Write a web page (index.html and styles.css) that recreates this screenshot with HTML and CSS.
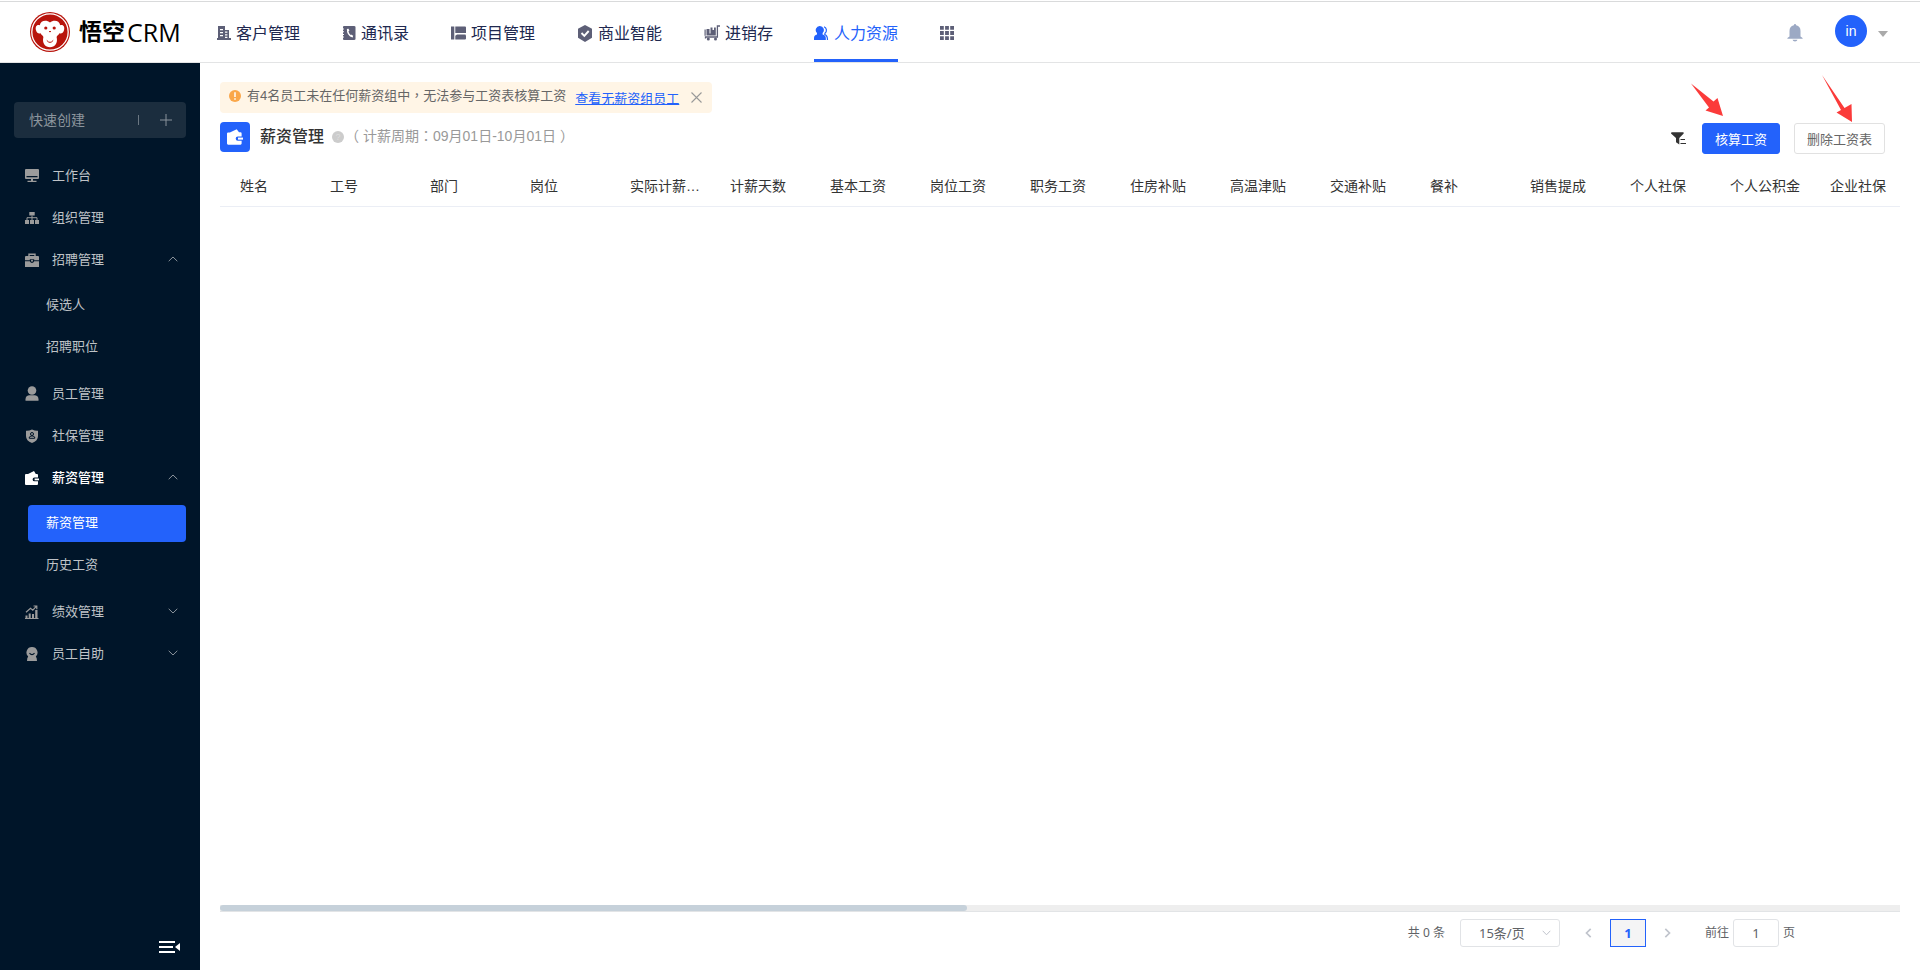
FILE: index.html
```html
<!DOCTYPE html>
<html lang="zh-CN">
<head>
  <meta charset="UTF-8">
  <meta name="viewport" content="width=device-width, initial-scale=1.0">
  <title>薪资管理 - 悟空CRM</title>
  <link rel="stylesheet" href="styles.css">
</head>
<body>
  <header class="header">
    <div class="logo">
      <svg width="40" height="40" viewBox="0 0 40 40">
        <circle cx="20" cy="20" r="20" fill="#b8140c"/>
        <circle cx="20" cy="20" r="18.2" fill="none" stroke="#fff" stroke-width="1.3"/>
        <path fill="#fff" d="M20 10.5C17 7.6 10.6 7.8 9.8 13.2C6.6 12 5 15 6 18.2C6.8 21 8.8 22 10.6 21.2C11.4 23 13 23.4 13.4 25C11.8 31.5 15.4 35.2 20 35.2S28.2 31.5 26.6 25C27 23.4 28.6 23 29.4 21.2C31.2 22 33.2 21 34 18.2C35 15 33.4 12 30.2 13.2C29.4 7.8 23 7.6 20 10.5Z"/>
        <circle cx="15.8" cy="16" r="1.6" fill="#b8140c"/>
        <circle cx="24.2" cy="16" r="1.6" fill="#b8140c"/>
        <path d="M19 19.6h2M16.8 28.4Q20 32.4 23.2 28.4" fill="none" stroke="#b8140c" stroke-width="1"/>
      </svg>
      <span class="logo-cn">悟空</span><span class="logo-en">CRM</span>
    </div>
    <nav class="nav">
      <a class="nav-item">
        <svg width="14" height="14" viewBox="0 0 14 14"><path fill="currentColor" fill-rule="evenodd" d="M1 0h7v4h4v8h2v2H0v-2h1zM3 3v1.3h3V3zM3 6v1.3h3V6zM3 9v1.3h3V9zM8 5.6v1.2h2.4V5.6zM8 8.2v1.2h2.4V8.2zM8 10.8V12h2.4v-1.2z"/></svg>
        <span>客户管理</span>
      </a>
      <a class="nav-item">
        <svg width="14" height="14" viewBox="0 0 14 14"><path fill="currentColor" d="M2 0h10q1.500 0 1.500 1v12q0 1-1.500 1H2q-1 0-1-1v-1.500h1v-1H1V9h1V8H1V6.200h1v-1H1V3.500h1v-1H1V1q0-1 1-1z"/><path d="M5.700 3q-.8 5.500 5 8" fill="none" stroke="#fff" stroke-width="1.300"/><path d="M5.400 3l1.400 1.900M8.600 9.300l2.200 1.300" stroke="#fff" stroke-width="1.700"/></svg>
        <span>通讯录</span>
      </a>
      <a class="nav-item">
        <svg width="15" height="14" viewBox="0 0 15 14"><path fill="currentColor" d="M0 .5h3.300v13H0zM4.300.5H14q1 0 1 1V7H4.300zM6 8.500h8.500L15 10v2.500q0 1-1 1H4.300v-3.800z"/></svg>
        <span>项目管理</span>
      </a>
      <a class="nav-item">
        <svg width="16" height="17" viewBox="0 0 16 17"><path fill="currentColor" d="M8 0l7 3.800v9L8 17l-7-4.200v-9z"/><path d="M4.500 8l2.800 2.800L11.700 6" fill="none" stroke="#fff" stroke-width="1.900"/></svg>
        <span>商业智能</span>
      </a>
      <a class="nav-item">
        <svg width="16" height="16" viewBox="0 0 16 16"><path fill="currentColor" d="M.5 4.500h1.200v6.300H.5zM2.500 4h3v4.500h1V2.500h2V5H10V2.500h1.800v8H2.500z"/><path d="M16 1h-2.600v11H1.500v1.500" fill="none" stroke="currentColor" stroke-width="1.300"/><circle cx="4.300" cy="14" r="1.500" fill="currentColor"/><circle cx="11.500" cy="14" r="1.500" fill="currentColor"/></svg>
        <span>进销存</span>
      </a>
      <a class="nav-item active">
        <svg width="15" height="14" viewBox="0 0 15 14"><path fill="currentColor" d="M5.800 0a4 4 0 0 1 2.800 6.900V8.500q3.200.7 3.200 3.500v2H0v-2q0-2.800 3-3.500V6.900A4 4 0 0 1 5.800 0z"/><path d="M10 .8a3.700 3.700 0 0 1 1 6.400l-.2 1.300q2.700 1 2.700 5.500" fill="none" stroke="currentColor" stroke-width="1.200"/></svg>
        <span>人力资源</span>
      </a>
      <a class="nav-item">
        <svg width="14" height="14" viewBox="0 0 14 14"><path fill="currentColor" d="M0 0h3.800v3.800H0zM5.100 0h3.800v3.800H5.100zM10.200 0H14v3.800h-3.800zM0 5.100h3.800v3.800H0zM5.100 5.100h3.800v3.800H5.100zM10.200 5.100H14v3.800h-3.800zM0 10.200h3.800V14H0zM5.100 10.200h3.800V14H5.100zM10.200 10.200H14V14h-3.800z"/></svg>
      </a>
    </nav>
    <div class="user">
      <svg class="bell" width="16" height="18" viewBox="0 0 16 18"><path fill="#9ca9c4" d="M8 0q1 0 1.200 1.300Q13.500 2.300 13.500 7v5.500L15.600 14v.8H.4V14l2.100-1.500V7q0-4.700 4.300-5.700Q7 0 8 0zM5.500 15.800h5Q10 17.500 8 17.500T5.500 15.800z"/></svg>
      <span class="avatar">in</span>
      <span class="caret"></span>
    </div>
  </header>

  <div class="layout">
    <aside class="sidebar">
      <div class="quick-create">
        <span class="quick-text">快速创建</span>
        <span class="quick-line"></span>
        <svg width="12" height="12" viewBox="0 0 12 12"><path d="M6 0v12M0 6h12" stroke="#8a939b" stroke-width="1"/></svg>
      </div>
      <ul class="menu">
        <li class="menu-item">
          <svg width="14" height="14" viewBox="0 0 14 14"><path fill="currentColor" fill-rule="evenodd" d="M1 0h12q1 0 1 1v8q0 1-1 1H8v1.800h3.500V13h-9v-1.200H6V10H1q-1 0-1-1V1q0-1 1-1zM1.500 7v1.200h11V7z"/></svg>
          <span>工作台</span>
        </li>
        <li class="menu-item">
          <svg width="14" height="14" viewBox="0 0 14 14"><path fill="currentColor" d="M4.300 1h5.400v3.600H4.300zM0 9h4v4H0zM5 9h4v4H5zM10 9h4v4h-4z"/><path d="M2 9V6.700h10V9M7 4.500V9" fill="none" stroke="currentColor"/></svg>
          <span>组织管理</span>
        </li>
        <li class="menu-item">
          <svg width="14" height="14" viewBox="0 0 14 14"><path d="M4 3.500V1.200h6v2.300" fill="none" stroke="currentColor" stroke-width="1.400"/><path fill="currentColor" d="M1 3h12q1 0 1 1v3.200H9.200V6.200H4.800v1H0V4q0-1 1-1zM0 8.200h4.800Q5.500 10 7 10t2.200-1.800H14V14H0z"/><circle cx="7" cy="7.700" r="1" fill="currentColor"/></svg>
          <span>招聘管理</span>
          <svg class="arrow" width="10" height="6" viewBox="0 0 10 6"><path d="M.7 5.200L5 1l4.300 4.200" fill="none" stroke="#8a939b"/></svg>
        </li>
        <li class="submenu">
          <div class="sub-item">候选人</div>
          <div class="sub-item">招聘职位</div>
        </li>
        <li class="menu-item">
          <svg width="14" height="16" viewBox="0 0 14 16"><circle cx="7" cy="4.500" r="4.300" fill="currentColor"/><path fill="currentColor" d="M4 9.300h6q3.500.7 3.500 4v1.500H.5v-1.500q0-3.300 3.500-4z"/></svg>
          <span>员工管理</span>
        </li>
        <li class="menu-item">
          <svg width="14" height="14" viewBox="0 0 14 14"><path fill="currentColor" d="M7 .5q3 1.500 6 1.300V7q0 5-6 7Q1 12 1 7V1.800Q4 2 7 .5z"/><circle cx="7" cy="5" r="1.500" fill="none" stroke="#001529"/><path d="M4.300 9.300V8L6 7h2l1.700 1v1.300z" fill="none" stroke="#001529"/></svg>
          <span>社保管理</span>
        </li>
        <li class="menu-item active">
          <svg width="14" height="14" viewBox="0 0 14 14"><path fill="currentColor" d="M3 3L9 0l1.800 2.900H12q1 0 1 1V6.500H9.500a1.900 1.900 0 0 0 0 3.800H13v2.700q0 1-1 1H1q-1 0-1-1V4q0-1 1-1z"/><path fill="currentColor" d="M9.600 7.500H14v1.800H9.600z"/></svg>
          <span>薪资管理</span>
          <svg class="arrow" width="10" height="6" viewBox="0 0 10 6"><path d="M.7 5.200L5 1l4.300 4.200" fill="none" stroke="#8a939b"/></svg>
        </li>
        <li class="submenu">
          <div class="sub-item active">薪资管理</div>
          <div class="sub-item">历史工资</div>
        </li>
        <li class="menu-item">
          <svg width="14" height="14" viewBox="0 0 14 14"><path fill="currentColor" d="M.5 10.500h2V13h-2zM3.700 8.500h2V13h-2zM7 9h2v4H7zM10.200 5h2.300v8h-2.300zM0 13h13.500v1H0z"/><path d="M1 7.300l4.500-4 2.300 1.800 3.700-4M8.500 1h3.300v3.300" fill="none" stroke="currentColor" stroke-width="1.200"/></svg>
          <span>绩效管理</span>
          <svg class="arrow" width="10" height="6" viewBox="0 0 10 6"><path d="M.7.800L5 5 9.300.8" fill="none" stroke="#8a939b"/></svg>
        </li>
        <li class="menu-item">
          <svg width="14" height="14" viewBox="0 0 14 14"><path fill="currentColor" d="M7 0a5.500 5.500 0 0 1 3.800 9.500q1.200 1 1.200 4.500H2q0-3.500 1.200-4.500A5.500 5.500 0 0 1 7 0z"/><path d="M4.500 6.200Q7 9 9.500 6.200" fill="none" stroke="#001529" stroke-width="1.200"/></svg>
          <span>员工自助</span>
          <svg class="arrow" width="10" height="6" viewBox="0 0 10 6"><path d="M.7.800L5 5 9.300.8" fill="none" stroke="#8a939b"/></svg>
        </li>
      </ul>
      <div class="collapse">
        <svg width="22" height="12" viewBox="0 0 22 12"><path fill="#fff" d="M0 0h16v2H0zM0 5h14v2H0zM0 10h16v2H0zM21 2v8l-5-4z"/></svg>
      </div>
    </aside>

    <main class="main">
      <div class="alert">
        <svg width="12" height="12" viewBox="0 0 12 12"><circle cx="6" cy="6" r="6" fill="#faa74a"/><path d="M6 2.200v4.800M6 8.200v1.600" stroke="#fff" stroke-width="1.500"/></svg>
        <span class="alert-text">有4名员工未在任何薪资组中<span class="mark" lang="zh-Hant">，</span>无法参与工资表核算工资</span>
        <a class="alert-link">查看无薪资组员工</a>
        <svg width="11" height="11" viewBox="0 0 11 11"><path d="M.5.500l10 10M10.500.5l-10 10" stroke="#999" stroke-width="1.100"/></svg>
      </div>

      <div class="title-bar">
        <span class="title-icon">
          <svg width="16" height="16" viewBox="0 0 14 14"><path fill="#fff" d="M2.500 3L8.500.2l2 2.700h1.300q1 0 1 1V6.500H9.500a1.900 1.900 0 0 0 0 3.800h3.300v2.400q0 1-1 1H1q-1 0-1-1V4q0-1 1-1z"/><path fill="#fff" d="M9.600 7.500H14v1.800H9.600z"/></svg>
        </span>
        <h1 class="title">薪资管理</h1>
        <span class="help">?</span>
        <span class="period"><span class="paren-left">（</span>计薪周期<span class="mark" lang="zh-Hant">：</span>09月01日-10月01日<span class="paren-right">）</span></span>
        <div class="actions">
          <svg width="15" height="13" viewBox="0 0 15 13"><path fill="#333" d="M0 1.500Q0 .3 1 .3h11q1 0 .7 1.200L8.300 6v6.500L5 10.300V6z"/><path d="M9.500 7.500H14M9.500 11.500H15" stroke="#333" stroke-width="1.200"/></svg>
          <button class="btn btn-primary">核算工资</button>
          <button class="btn">删除工资表</button>
        </div>
      </div>

      <div class="table-head">
        <div class="th">姓名</div>
        <div class="th">工号</div>
        <div class="th">部门</div>
        <div class="th">岗位</div>
        <div class="th">实际计薪天数</div>
        <div class="th">计薪天数</div>
        <div class="th">基本工资</div>
        <div class="th">岗位工资</div>
        <div class="th">职务工资</div>
        <div class="th">住房补贴</div>
        <div class="th">高温津贴</div>
        <div class="th">交通补贴</div>
        <div class="th">餐补</div>
        <div class="th">销售提成</div>
        <div class="th">个人社保</div>
        <div class="th">个人公积金</div>
        <div class="th last">企业社保</div>
      </div>
      <div class="table-body"></div>
      <div class="scroll-bar"><div class="scroll-thumb"></div></div>

      <div class="pagination">
        <span class="total">共 0 条</span>
        <div class="page-size">
          <span>15条/页</span>
          <svg width="9" height="6" viewBox="0 0 9 6"><path d="M.7.800l3.800 4 3.800-4" fill="none" stroke="#c0c4cc"/></svg>
        </div>
        <svg class="prev" width="7" height="10" viewBox="0 0 7 10"><path d="M5.700.8L1.500 5l4.200 4.200" fill="none" stroke="#c0c4cc" stroke-width="1.700"/></svg>
        <span class="page-num">1</span>
        <svg class="next" width="7" height="10" viewBox="0 0 7 10"><path d="M1.300.8L5.500 5 1.300 9.200" fill="none" stroke="#c0c4cc" stroke-width="1.700"/></svg>
        <span class="jump">前往</span>
        <span class="jump-input">1</span>
        <span class="jump">页</span>
      </div>
    </main>
  </div>

  <!-- red pointers over the two buttons -->
  <svg class="pointers" width="170" height="50" viewBox="0 0 170 50">
    <path fill="#fb3b3a" d="M0 8.500L22.500 26.500 26.500 23 32 41 14.500 35.500 18 32.500z"/>
    <path fill="#fb3b3a" d="M131 0L153.500 33 160.500 29 161 47 145.500 37.500 150 35z"/>
  </svg>
</body>
</html>
```

FILE: styles.css
```css
* {
  box-sizing: border-box;
}
body {
  margin: 0;
  padding-top: 1px;
  height: 970px;
  display: flex;
  flex-direction: column;
  overflow: hidden;
  background: #fff;
  color: #333;
  font-family: "Liberation Sans", "Noto Sans CJK SC", sans-serif;
  font-size: 13px;
}
svg {
  display: block;
  flex-shrink: 0;
}

/* header */
.header {
  height: 62px;
  display: flex;
  align-items: center;
  border-top: 1px solid #d9dadb;
  border-bottom: 1px solid #e3e4e5;
  flex-shrink: 0;
}
.logo {
  width: 217px;
  padding-left: 30px;
  display: flex;
  align-items: center;
  color: #000;
}
.logo-cn {
  margin-left: 9px;
  font-size: 23px;
  font-weight: 700;
  line-height: 40px;
}
.logo-en {
  margin-left: 2px;
  font-family: "Open Sans", sans-serif;
  font-size: 25px;
  font-weight: 500;
  line-height: 40px;
}
.nav {
  display: flex;
  align-self: stretch;
  gap: 42px;
}
.nav-item {
  display: flex;
  align-items: center;
  gap: 5px;
  font-size: 16px;
  color: #20284f;
  border-bottom: 3px solid transparent;
  padding-top: 3px;
}
.nav-item svg {
  margin-top: 2px;
  color: #5d5f77;
}
.nav-item.active,
.nav-item.active svg {
  color: #2362fb;
}
.nav-item.active {
  margin-left: -1px;
  border-bottom-color: #2362fb;
}
.user {
  margin-left: auto;
  padding-right: 32px;
  display: flex;
  align-items: center;
}
.avatar {
  width: 32px;
  height: 32px;
  margin: -2px 11px 0 32px;
  border-radius: 50%;
  background: #2362fb;
  color: #fff;
  font-size: 14px;
  line-height: 32px;
  text-align: center;
}
.bell {
  margin-top: 1px;
}
.caret {
  margin-top: 3px;
  border: 5px solid transparent;
  border-top: 6px solid #aaa;
  border-bottom: 0;
}

/* sidebar */
.layout {
  display: flex;
  flex: 1;
}
.sidebar {
  width: 200px;
  background: #001529;
  color: #bfc3c7;
  padding-top: 39px;
  display: flex;
  flex-direction: column;
  flex-shrink: 0;
}
.quick-create {
  height: 36px;
  margin: 0 14px 16px;
  padding: 0 14px 0 15px;
  display: flex;
  align-items: center;
  border-radius: 4px;
  background: #1b2d3e;
  color: #8c959d;
  font-size: 14px;
}
.quick-text {
  margin-top: -2px;
}
.quick-line {
  width: 1px;
  height: 10px;
  margin: 0 21px 0 auto;
  background: #6b7782;
}
.menu {
  list-style: none;
  margin: 0;
  padding: 0;
}
.menu-item {
  height: 42px;
  padding: 0 22px 2px 25px;
  display: flex;
  align-items: center;
  gap: 13px;
}
.menu-item svg {
  margin-top: 4px;
  color: #9b9b9b;
}
.menu-item.active,
.menu-item.active svg {
  color: #fff;
}
.menu-item.active {
  font-weight: 500;
}
.menu-item .arrow {
  margin-left: auto;
  margin-top: 1px;
}
.submenu {
  padding: 4px 14px 4px 28px;
}
.sub-item {
  height: 37px;
  margin: 3px 0 5px;
  padding-left: 18px;
  line-height: 36px;
  border-radius: 4px;
}
.sub-item:last-child {
  margin-bottom: 2px;
}
.sub-item.active {
  background: #2362fb;
  color: #fff;
}
.collapse {
  margin-top: auto;
  padding: 0 19px 17px;
  display: flex;
  justify-content: flex-end;
}

/* content */
.main {
  flex: 1;
  min-width: 0;
  padding: 19px 20px 0;
  display: flex;
  flex-direction: column;
}
.alert {
  width: 492px;
  height: 31px;
  padding: 0 10px 0 9px;
  display: flex;
  align-items: center;
  border-radius: 4px;
  background: #fff5e6;
  color: #666;
  white-space: nowrap;
}
.alert > svg:first-child {
  margin-top: -4px;
}
.alert-text {
  margin: -6px 9px 0 6px;
}
.alert-link {
  color: #2362fb;
  text-decoration: underline;
  margin-right: auto;
}
.mark {
  font-family: "Noto Sans CJK TC", sans-serif;
  line-height: 1;
}
.title-bar {
  height: 40px;
  padding-top: 9px;
  display: flex;
  align-items: flex-start;
}
.title-icon {
  width: 30px;
  height: 30px;
  display: flex;
  align-items: center;
  justify-content: center;
  border-radius: 4px;
  background: #2362fb;
}
.title {
  margin: 1px 8px 0 10px;
  font-size: 16px;
  font-weight: 500;
  line-height: 28px;
}
.help {
  width: 12px;
  height: 12px;
  margin-top: 9px;
  border-radius: 50%;
  background: #ccc;
  color: #ddd;
  font-size: 9px;
  line-height: 12px;
  text-align: center;
}
.period {
  margin-left: 5px;
  color: #999;
  font-size: 14px;
  line-height: 28px;
}
.paren-left {
  margin: 0 4px 0 -4px;
}
.paren-right {
  margin-left: 4px;
}
.actions {
  margin: 1px 15px 0 auto;
  display: flex;
  align-items: center;
}
.btn {
  height: 31px;
  width: 91px;
  margin-left: 14px;
  padding: 0 0 1px;
  border: 1px solid #e1e1e1;
  border-radius: 3px;
  background: #fff;
  color: #666;
  font-family: inherit;
  font-size: 13px;
}
.btn-primary {
  width: 78px;
  margin-left: 16px;
  border-color: #2362fb;
  background: #2362fb;
  color: #fff;
}
.table-head {
  height: 54px;
  padding-top: 13px;
  display: flex;
  align-items: flex-start;
  border-bottom: 1px solid #ebeef5;
}
.th {
  width: 100px;
  padding: 0 10px;
  flex-shrink: 0;
  font-size: 14px;
  line-height: 40px;
  white-space: nowrap;
  overflow: hidden;
  text-overflow: ellipsis;
}
.th:first-child {
  padding-left: 20px;
}
.th.last {
  width: 80px;
  padding-right: 0;
}
.table-body {
  flex: 1;
}
.scroll-bar {
  height: 7px;
  background: #eee;
  border-bottom: 1px solid #e2e4e6;
}
.scroll-thumb {
  width: 747px;
  height: 6px;
  border-radius: 3px;
  background: #c6d1da;
}
.pagination {
  height: 58px;
  padding: 7px 105px 0 0;
  display: flex;
  align-items: flex-start;
  justify-content: flex-end;
  color: #606266;
  font-family: "Noto Sans", "Noto Sans CJK SC", sans-serif;
  font-size: 13px;
  line-height: 28px;
}
.total {
  margin-right: 15px;
  font-size: 12px;
}
.page-size {
  width: 100px;
  height: 28px;
  padding: 0 8px 0 18px;
  display: flex;
  align-items: center;
  justify-content: space-between;
  border: 1px solid #e1e3e6;
  border-radius: 3px;
}
.prev {
  margin: 9px 18px 0 25px;
}
.next {
  margin: 9px 34px 0 18px;
}
.page-num {
  width: 36px;
  height: 28px;
  border: 1px solid #2362fb;
  background: #f4f4f5;
  color: #2362fb;
  font-weight: 700;
  line-height: 26px;
  text-align: center;
}
.jump {
  font-size: 12px;
}
.jump-input {
  width: 46px;
  height: 28px;
  margin: 0 4px;
  border: 1px solid #e1e3e6;
  border-radius: 3px;
  line-height: 26px;
  text-align: center;
}
.pointers {
  position: absolute;
  left: 1691px;
  top: 75px;
}
```
